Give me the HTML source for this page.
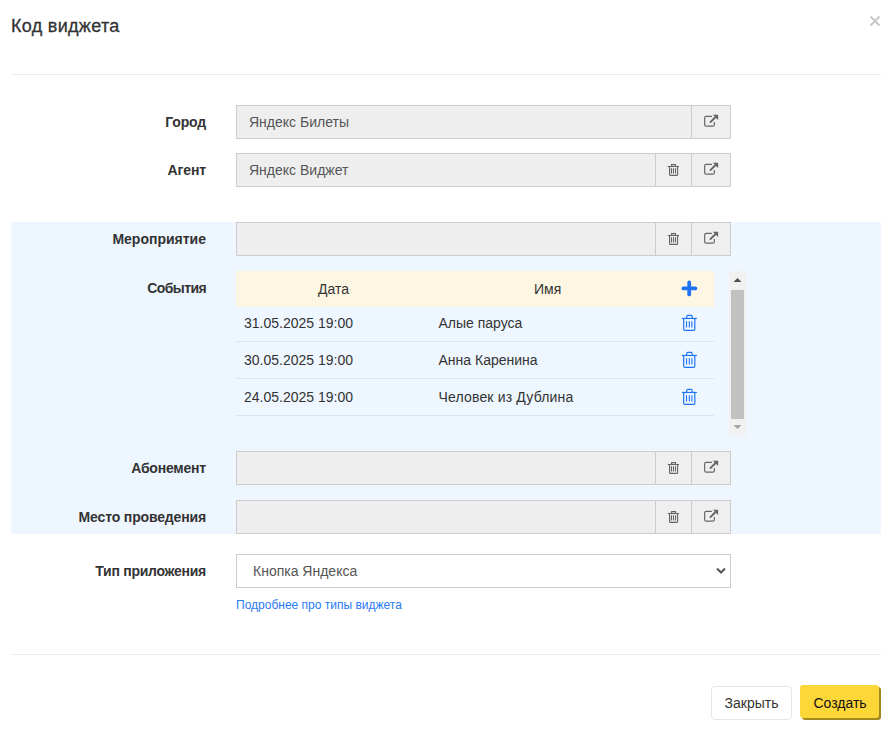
<!DOCTYPE html>
<html><head><meta charset="utf-8">
<style>
*{box-sizing:border-box}
html,body{margin:0;padding:0;background:#fff;width:892px;height:732px;overflow:hidden;font-family:"Liberation Sans",sans-serif;color:#333}
.a{position:absolute}
.title{left:11px;top:15px;font-size:18px;line-height:22px;color:#333;letter-spacing:0.3px;-webkit-text-stroke:0.3px #333}
.close{left:869px;top:15px;width:12px;height:12px}
.hr{left:11px;width:870px;height:1px;background:#ebebeb}
.lbl{position:absolute;right:686px;font-size:14px;font-weight:bold;line-height:16px;color:#333;text-align:right;white-space:nowrap}
.inp{position:absolute;left:236px;width:495px;height:34px;border:1px solid #ccc;background:#eee;font-size:14px;color:#555}
.inp .t{position:absolute;left:12px;top:8px;line-height:16px}
.btn{position:absolute;top:-1px;height:34px;border:1px solid #ccc;background:#efefef}
.blue{left:11px;top:222px;width:870px;height:312px;background:#eef6ff}
.thead{left:236px;top:271px;width:478px;height:36px;background:#fdf6e3;font-size:14px;color:#333}
.tr{position:absolute;left:236px;width:478px;border-bottom:1px solid #dde3ea;font-size:14px;color:#333}
.sb{left:729px;top:271px;width:17px;height:165px;background:#f1f1f1}
.sel{left:236px;top:554px;width:495px;height:34px;border:1px solid #ccc;background:#fff;font-size:14px;color:#555}
.link{left:236px;top:598px;font-size:12px;line-height:14px;color:#2a7af5}
.b1{left:711px;top:686px;width:81px;height:34px;border:1px solid #e6e6e6;border-radius:4px;background:#fff;font-size:14px;color:#333;text-align:center;line-height:33px}
.b2{left:800px;top:685px;width:79px;height:33px;border-radius:3px;background:#fdd638;box-shadow:2px 2px 0 #a38a1f;font-size:14px;color:#111;text-align:center;line-height:36px;padding-left:1px}
</style></head><body>
<div class="a title">Код виджета</div>
<svg class="a close" viewBox="0 0 12 12"><path d="M1.5 1.5L10.5 10.5M10.5 1.5L1.5 10.5" stroke="#c8c8c8" stroke-width="2"/></svg>
<div class="a hr" style="top:74px"></div>
<div class="lbl" style="top:114px;letter-spacing:-0.15px">Город</div>
<div class="inp" style="top:105px"><span class="t">Яндекс Билеты</span><div class="btn" style="left:454px;width:40px"></div></div>
<svg class="a" style="left:700px;top:110px" width="22" height="22" viewBox="0 0 22 22"><path d="M11.9 6.46H6.2Q4.66 6.46 4.66 8V14.66Q4.66 16.2 6.2 16.2H12.8Q14.35 16.2 14.35 14.66V12" fill="none" stroke="#666" stroke-width="1.2"/><path d="M9.9 12.7L15.6 7" stroke="#666" stroke-width="1.9"/><path d="M12.8 4.8H18.1V10.1Z" fill="#666"/></svg>
<div class="lbl" style="top:162px;letter-spacing:-0.1px">Агент</div>
<div class="inp" style="top:153px"><span class="t">Яндекс Виджет</span><div class="btn" style="left:418px;width:37px"></div><div class="btn" style="left:454px;width:40px"></div></div>
<svg class="a" style="left:664px;top:160px" width="20" height="20" viewBox="0 0 20 20"><g fill="none" stroke="#666" stroke-width="1.1"><path d="M7.6 6.3V4.6H11.5V6.3"/><path d="M3.8 6.5H15"/><path d="M5.55 6.5V14.4Q5.55 15.35 6.5 15.35H12.65Q13.6 15.35 13.6 14.4V6.5"/><path d="M7.45 8.2V13.5M9.45 8.2V13.5M11.5 8.2V13.5"/></g></svg>
<svg class="a" style="left:700px;top:158px" width="22" height="22" viewBox="0 0 22 22"><path d="M11.9 6.46H6.2Q4.66 6.46 4.66 8V14.66Q4.66 16.2 6.2 16.2H12.8Q14.35 16.2 14.35 14.66V12" fill="none" stroke="#666" stroke-width="1.2"/><path d="M9.9 12.7L15.6 7" stroke="#666" stroke-width="1.9"/><path d="M12.8 4.8H18.1V10.1Z" fill="#666"/></svg>
<div class="a blue"></div>
<div class="lbl" style="top:231px;letter-spacing:0px">Мероприятие</div>
<div class="inp" style="top:222px"><div class="btn" style="left:418px;width:37px"></div><div class="btn" style="left:454px;width:40px"></div></div>
<svg class="a" style="left:664px;top:229px" width="20" height="20" viewBox="0 0 20 20"><g fill="none" stroke="#666" stroke-width="1.1"><path d="M7.6 6.3V4.6H11.5V6.3"/><path d="M3.8 6.5H15"/><path d="M5.55 6.5V14.4Q5.55 15.35 6.5 15.35H12.65Q13.6 15.35 13.6 14.4V6.5"/><path d="M7.45 8.2V13.5M9.45 8.2V13.5M11.5 8.2V13.5"/></g></svg>
<svg class="a" style="left:700px;top:227px" width="22" height="22" viewBox="0 0 22 22"><path d="M11.9 6.46H6.2Q4.66 6.46 4.66 8V14.66Q4.66 16.2 6.2 16.2H12.8Q14.35 16.2 14.35 14.66V12" fill="none" stroke="#666" stroke-width="1.2"/><path d="M9.9 12.7L15.6 7" stroke="#666" stroke-width="1.9"/><path d="M12.8 4.8H18.1V10.1Z" fill="#666"/></svg>
<div class="lbl" style="top:280px;letter-spacing:-0.6px">События</div>
<div class="a thead"><span class="a" style="left:82px;top:10px;line-height:16px">Дата</span><span class="a" style="left:298px;top:10px;line-height:16px">Имя</span></div>
<svg class="a" style="left:679px;top:278px" width="20" height="20" viewBox="0 0 20 20"><path d="M10.2 4.4V16.4M4.4 10.4H16.4" stroke="#1f74f5" stroke-width="3.8" stroke-linecap="round"/></svg>
<div class="tr" style="top:307px;height:35px"><span class="a" style="left:8px;top:8px;line-height:16px">31.05.2025 19:00</span><span class="a" style="left:202.5px;top:8px;line-height:16px;letter-spacing:0px">Алые паруса</span></div>
<svg class="a" style="left:679px;top:313px" width="20" height="20" viewBox="0 0 20 20"><g fill="none" stroke="#1f74f5" stroke-width="1.2"><path d="M7.4 5.4L8 2.9Q8.2 2.4 8.8 2.4H12.1Q12.7 2.4 12.9 2.9L13.5 5.4"/><path d="M2.9 5.45H17.9"/><path d="M4.7 5.45V16.2Q4.7 17.3 5.8 17.3H14.7Q15.8 17.3 15.8 16.2V5.45"/><path d="M7.55 8.3V14.6M10.35 8.3V14.6M12.9 8.3V14.6" stroke-width="1.1"/></g></svg>
<div class="tr" style="top:342px;height:37px"><span class="a" style="left:8px;top:10px;line-height:16px">30.05.2025 19:00</span><span class="a" style="left:202.5px;top:10px;line-height:16px;letter-spacing:0px">Анна Каренина</span></div>
<svg class="a" style="left:679px;top:350px" width="20" height="20" viewBox="0 0 20 20"><g fill="none" stroke="#1f74f5" stroke-width="1.2"><path d="M7.4 5.4L8 2.9Q8.2 2.4 8.8 2.4H12.1Q12.7 2.4 12.9 2.9L13.5 5.4"/><path d="M2.9 5.45H17.9"/><path d="M4.7 5.45V16.2Q4.7 17.3 5.8 17.3H14.7Q15.8 17.3 15.8 16.2V5.45"/><path d="M7.55 8.3V14.6M10.35 8.3V14.6M12.9 8.3V14.6" stroke-width="1.1"/></g></svg>
<div class="tr" style="top:379px;height:37px"><span class="a" style="left:8px;top:10px;line-height:16px">24.05.2025 19:00</span><span class="a" style="left:202.5px;top:10px;line-height:16px;letter-spacing:0.17px">Человек из Дублина</span></div>
<svg class="a" style="left:679px;top:387px" width="20" height="20" viewBox="0 0 20 20"><g fill="none" stroke="#1f74f5" stroke-width="1.2"><path d="M7.4 5.4L8 2.9Q8.2 2.4 8.8 2.4H12.1Q12.7 2.4 12.9 2.9L13.5 5.4"/><path d="M2.9 5.45H17.9"/><path d="M4.7 5.45V16.2Q4.7 17.3 5.8 17.3H14.7Q15.8 17.3 15.8 16.2V5.45"/><path d="M7.55 8.3V14.6M10.35 8.3V14.6M12.9 8.3V14.6" stroke-width="1.1"/></g></svg>
<div class="a sb"><div class="a" style="left:2px;top:19px;width:13px;height:129px;background:#c1c1c1"></div>
<svg class="a" style="left:0;top:0" width="17" height="17"><path d="M4.5 11H12.5L8.5 7Z" fill="#505050"/></svg>
<svg class="a" style="left:0;top:148px" width="17" height="17"><path d="M4.5 6H12.5L8.5 10Z" fill="#a3a3a3"/></svg></div>
<div class="lbl" style="top:460px;letter-spacing:-0.2px">Абонемент</div>
<div class="inp" style="top:451px"><div class="btn" style="left:418px;width:37px"></div><div class="btn" style="left:454px;width:40px"></div></div>
<svg class="a" style="left:664px;top:458px" width="20" height="20" viewBox="0 0 20 20"><g fill="none" stroke="#666" stroke-width="1.1"><path d="M7.6 6.3V4.6H11.5V6.3"/><path d="M3.8 6.5H15"/><path d="M5.55 6.5V14.4Q5.55 15.35 6.5 15.35H12.65Q13.6 15.35 13.6 14.4V6.5"/><path d="M7.45 8.2V13.5M9.45 8.2V13.5M11.5 8.2V13.5"/></g></svg>
<svg class="a" style="left:700px;top:456px" width="22" height="22" viewBox="0 0 22 22"><path d="M11.9 6.46H6.2Q4.66 6.46 4.66 8V14.66Q4.66 16.2 6.2 16.2H12.8Q14.35 16.2 14.35 14.66V12" fill="none" stroke="#666" stroke-width="1.2"/><path d="M9.9 12.7L15.6 7" stroke="#666" stroke-width="1.9"/><path d="M12.8 4.8H18.1V10.1Z" fill="#666"/></svg>
<div class="lbl" style="top:509px;letter-spacing:-0.15px">Место проведения</div>
<div class="inp" style="top:500px"><div class="btn" style="left:418px;width:37px"></div><div class="btn" style="left:454px;width:40px"></div></div>
<svg class="a" style="left:664px;top:507px" width="20" height="20" viewBox="0 0 20 20"><g fill="none" stroke="#666" stroke-width="1.1"><path d="M7.6 6.3V4.6H11.5V6.3"/><path d="M3.8 6.5H15"/><path d="M5.55 6.5V14.4Q5.55 15.35 6.5 15.35H12.65Q13.6 15.35 13.6 14.4V6.5"/><path d="M7.45 8.2V13.5M9.45 8.2V13.5M11.5 8.2V13.5"/></g></svg>
<svg class="a" style="left:700px;top:505px" width="22" height="22" viewBox="0 0 22 22"><path d="M11.9 6.46H6.2Q4.66 6.46 4.66 8V14.66Q4.66 16.2 6.2 16.2H12.8Q14.35 16.2 14.35 14.66V12" fill="none" stroke="#666" stroke-width="1.2"/><path d="M9.9 12.7L15.6 7" stroke="#666" stroke-width="1.9"/><path d="M12.8 4.8H18.1V10.1Z" fill="#666"/></svg>
<div class="lbl" style="top:563px;letter-spacing:-0.27px">Тип приложения</div>
<div class="a sel"><span class="a" style="left:16px;top:8px;line-height:16px">Кнопка Яндекса</span><svg class="a" style="left:478px;top:12px" width="12" height="8" viewBox="0 0 12 8"><path d="M2 1.5L6 5.5L10 1.5" fill="none" stroke="#555" stroke-width="2"/></svg></div>
<div class="a link">Подробнее про типы виджета</div>
<div class="a hr" style="top:654px"></div>
<div class="a b1">Закрыть</div>
<div class="a b2">Создать</div>
</body></html>
